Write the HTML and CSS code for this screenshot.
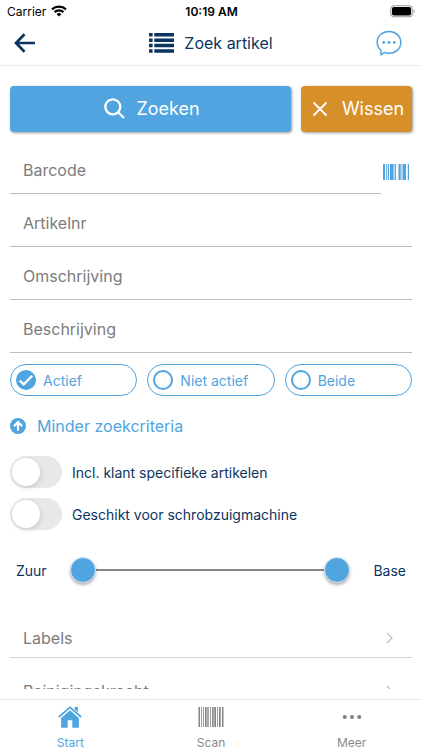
FILE: index.html
```html
<!DOCTYPE html>
<html lang="nl">
<head>
<meta charset="utf-8">
<meta name="viewport" content="width=device-width, initial-scale=1">
<title>Zoek artikel</title>
<link rel="stylesheet" href="styles.css">
</head>
<body>
<div class="status">
  <div class="status-side">
    <span>Carrier</span>
    <svg width="16" height="12" viewBox="0 0 16 12" fill="none" stroke="#000" stroke-width="2.2"><path d="M1 4.4a10.2 10.2 0 0 1 14 0M3.5 7.1a6.5 6.5 0 0 1 9 0"/><path d="M8 11.6 5.6 9.2a3.4 3.4 0 0 1 4.8 0z" fill="#000" stroke="none"/></svg>
  </div>
  <span class="status-time">10:19 AM</span>
  <div class="status-side status-end">
    <svg width="26" height="13" viewBox="0 0 26 13"><rect x=".8" y=".8" width="21.4" height="11" rx="3.2" fill="#fff" stroke="#999" stroke-width="1.1"/><rect x="2" y="2" width="19" height="8.6" rx="1.8"/><path d="M23.6 4.3c1.6.6 1.6 3.4 0 4z" fill="#999"/></svg>
  </div>
</div>
<header class="header">
  <button class="icon-button" aria-label="Terug">
    <svg width="22" height="20" viewBox="0 0 22 20" fill="none" stroke="#0b3560" stroke-width="2.7"><path d="M21 10H2.500M10.500 1.200 2 10l8.500 8.800"/></svg>
  </button>
  <h1 class="title">
    <svg width="25" height="20" viewBox="0 0 25 20" fill="#0b3560"><path d="M0 0h3.600v3.500H0zM5.300 0H25v3.500H5.300zM0 5.400h3.600v3.500H0zM5.300 5.400H25v3.500H5.300zM0 10.800h3.600v3.500H0zM5.300 10.800H25v3.500H5.300zM0 16.200h3.600v3.500H0zM5.300 16.200H25v3.500H5.300z"/></svg>
    <span>Zoek artikel</span>
  </h1>
  <button class="icon-button" aria-label="Chat">
    <svg width="26" height="26" viewBox="0 0 26 26" fill="none" stroke="#50a4e0" stroke-width="1.500" stroke-linejoin="round"><path d="M5 20.300C2.500 18.300 1.200 15.500 1.200 12.300 1.200 6 6.400 1.500 13 1.500s11.800 4.600 11.800 10.900S19.600 23.200 13 23.200c-1.600 0-3.100-.3-4.400-.8L4.900 24.800z"/><g fill="#50a4e0" stroke="none"><circle cx="7.700" cy="12.400" r="1.400"/><circle cx="13" cy="12.400" r="1.400"/><circle cx="18.300" cy="12.400" r="1.400"/></g></svg>
  </button>
</header>

<main class="content">
  <form class="form">
    <div class="actions">
      <button type="button" class="button search">
        <svg width="21" height="21" viewBox="0 0 21 21" fill="none" stroke="#fff" stroke-width="2.300"><circle cx="8.800" cy="8.800" r="7.500"/><path d="m14 14 6 6"/></svg>
        <span>Zoeken</span>
      </button>
      <button type="reset" class="button clear">
        <svg width="16" height="16" viewBox="0 0 16 16" fill="none" stroke="#fff" stroke-width="1.900"><path d="m1.500 1.500 13 13M14.500 1.500l-13 13"/></svg>
        <span>Wissen</span>
      </button>
    </div>

    <div class="fields">
      <div class="barcode-row">
        <input class="field" type="text" placeholder="Barcode" aria-label="Barcode">
        <button type="button" class="barcode-button" aria-label="Scan barcode">
          <svg width="26" height="16" viewBox="0 0 26 16" fill="#50a4e0"><path d="M0 0h2v16H0zM3.200 0h1v16h-1zM5 0h1v16H5zM7 0h3.600v16H7zM11.600 0h1.300v16h-1.300zM15.500 0h2.200v16h-2.200zM18.500 0h1v16h-1zM20 0h3v16h-3zM24.800 0H26v16h-1.200z"/></svg>
        </button>
      </div>
      <input class="field" type="text" placeholder="Artikelnr" aria-label="Artikelnr">
      <input class="field" type="text" placeholder="Omschrijving" aria-label="Omschrijving">
      <input class="field" type="text" placeholder="Beschrijving" aria-label="Beschrijving">
    </div>

    <div class="pills" role="radiogroup" aria-label="Status">
      <label class="pill"><span class="pill-mark"><input type="radio" name="status" checked><svg width="20" height="20" viewBox="0 0 20 20" fill="none" stroke="#fff" stroke-width="2.300"><path d="m3.800 10.700 3.900 3.600 8.500-8.500"/></svg></span>Actief</label>
      <label class="pill"><span class="pill-mark"><input type="radio" name="status"></span>Niet actief</label>
      <label class="pill"><span class="pill-mark"><input type="radio" name="status"></span>Beide</label>
    </div>

    <button type="button" class="less">
      <svg width="16" height="16" viewBox="0 0 16 16"><circle cx="8" cy="8" r="8" fill="#50a4e0"/><path d="M8 12.800V4.500M3.900 8.200 8 4.100l4.100 4.100" fill="none" stroke="#fff" stroke-width="2.200"/></svg>
      <span>Minder zoekcriteria</span>
    </button>

    <div class="switches">
      <label class="switch-row"><input class="switch" type="checkbox" role="switch">Incl. klant specifieke artikelen</label>
      <label class="switch-row"><input class="switch" type="checkbox" role="switch">Geschikt voor schrobzuigmachine</label>
    </div>

    <div class="range">
      <label for="ph-min">Zuur</label>
      <div class="range-track">
        <input id="ph-min" type="range" min="0" max="14" value="0">
        <input id="ph-max" type="range" min="0" max="14" value="14">
      </div>
      <label for="ph-max">Base</label>
    </div>

    <div class="links">
      <a class="link-row" href="#labels">Labels<svg width="7" height="12" viewBox="0 0 7 12" fill="none" stroke="#c2c2c4" stroke-width="1.300"><path d="m1 1 5 5-5 5"/></svg></a>
      <a class="link-row" href="#reinigingskracht">Reinigingskracht<svg width="7" height="12" viewBox="0 0 7 12" fill="none" stroke="#c2c2c4" stroke-width="1.300"><path d="m1 1 5 5-5 5"/></svg></a>
    </div>
  </form>
</main>

<nav class="tabs">
  <a class="tab active" href="#start">
    <svg width="24" height="22" viewBox="0 0 24 22" fill="#50a4e0"><path d="M12 4.300 20.900 12v8.500c0 .8-.5 1.300-1.300 1.300h-5.300v-7.500H9.700v7.500H4.400c-.8 0-1.300-.5-1.300-1.300V12z"/><path d="M16.600 1h3.300v6.600l-3.300-2.900z"/><path d="M.8 11.300 12 1.500l11.200 9.800" fill="none" stroke="#fff" stroke-width="3.400"/><path d="M.8 11 12 1.300 23.200 11" fill="none" stroke="#50a4e0" stroke-width="1.700"/></svg>
    <span>Start</span>
  </a>
  <a class="tab" href="#scan">
    <svg width="26" height="20" viewBox="0 0 26 20" fill="#858585"><path d="M.5 0H2v20H.5zM3.200 0h.8v20h-.8zM5 0h.8v20H5zM7 0h1.600v20H7zM9.300 0h1.400v20H9.300zM12 0h.8v20H12zM14.100 0h1.600v20h-1.600zM16.300 0H18v20h-1.700zM19 0h.8v20H19zM21 0h1.700v20H21zM24 0h1.500v20H24z"/></svg>
    <span>Scan</span>
  </a>
  <a class="tab" href="#meer">
    <svg width="20" height="20" viewBox="0 0 20 20" fill="#858585"><circle cx="2.800" cy="10" r="2.100"/><circle cx="10" cy="10" r="2.100"/><circle cx="17.200" cy="10" r="2.100"/></svg>
    <span>Meer</span>
  </a>
</nav>
</body>
</html>
```

FILE: styles.css
```css
* {
  box-sizing: border-box;
}

:root {
  --blue: #50a4e0;
  --navy: #0b3560;
  --gray: #7c7c7c;
}

body {
  display: flex;
  flex-direction: column;
  height: 100vh;
  margin: 0;
  background: #fff;
  color: var(--navy);
  font-family: Inter, "Liberation Sans", sans-serif;
  font-size: 14px;
}

svg {
  display: block;
  flex: none;
}

button,
input {
  margin: 0;
  font: inherit;
}

button {
  padding: 0;
  border: 0;
  background: none;
}

a {
  color: inherit;
  text-decoration: none;
}

.status {
  display: flex;
  align-items: center;
  height: 22px;
  padding: 0 6px 0 7px;
  color: #000;
  font-size: 12px;
}

.status-side {
  display: flex;
  flex: 1;
  align-items: center;
  gap: 5px;
}

.status-end {
  justify-content: flex-end;
}

.status-time {
  font-weight: 600;
}

.header {
  display: grid;
  grid-template-columns: 1fr auto 1fr;
  align-items: center;
  height: 44px;
  padding: 0 20px 2px 14px;
  border-bottom: 1px solid #ececec;
}

.icon-button {
  justify-self: start;
}

.icon-button:last-child {
  justify-self: end;
}

.title {
  display: flex;
  align-items: center;
  gap: 10px;
  margin: 0 0 0 6px;
  font-size: 16px;
  font-weight: 400;
}

.content {
  flex: 1;
  min-height: 0;
  margin-bottom: 10px;
  padding: 20px 10px 0;
  overflow-y: auto;
  scrollbar-width: none;
}

.actions {
  display: flex;
  gap: 10px;
}

.button {
  display: flex;
  align-items: center;
  justify-content: center;
  height: 46px;
  padding: 0 0 1px 3px;
  border-radius: 4px;
  box-shadow: 1px 1px 3px rgba(0, 0, 0, 0.4);
  color: #fff;
  font-size: 18px;
}

.search {
  flex: 1;
  gap: 11px;
  background: var(--blue);
}

.clear {
  gap: 14px;
  width: 111px;
  background: #d68f29;
}

.fields {
  display: flex;
  flex-direction: column;
  margin-top: 9px;
}

.field {
  width: 100%;
  min-width: 0;
  height: 53px;
  padding: 6px 12px 0 13px;
  border: 0;
  border-bottom: 1px solid #bcbcbc;
  border-radius: 0;
  outline: 0;
  background: transparent;
  color: var(--navy);
  font-size: 16px;
  line-height: 20px;
}

.field::placeholder {
  color: var(--gray);
  opacity: 1;
}

.barcode-row {
  display: flex;
  align-items: center;
  gap: 2px;
  padding-right: 3px;
}

.barcode-button {
  padding-top: 9px;
}

.pills {
  display: grid;
  grid-template-columns: repeat(3, 1fr);
  gap: 10px;
  margin-top: 11px;
}

.pill {
  display: flex;
  align-items: center;
  gap: 7px;
  height: 32px;
  padding-left: 5px;
  border: 1px solid var(--blue);
  border-radius: 16px;
  color: var(--blue);
}

.pill-mark {
  display: grid;
  place-items: center;
}

.pill-mark > * {
  grid-area: 1 / 1;
}

.pill-mark input {
  appearance: none;
  width: 20px;
  height: 20px;
  border: 2px solid var(--blue);
  border-radius: 50%;
}

.pill-mark input:checked {
  background: var(--blue);
}

.less {
  display: flex;
  align-items: center;
  gap: 11px;
  height: 20px;
  margin-top: 20px;
  color: var(--blue);
  font-size: 16px;
}

.switches {
  display: grid;
  gap: 10px;
  margin-top: 20px;
}

.switch-row {
  display: flex;
  align-items: center;
  gap: 10px;
}

.switch {
  display: flex;
  appearance: none;
  width: 52px;
  height: 32px;
  padding: 2px;
  border-radius: 16px;
  background: #e8e8ea;
}

.switch::before {
  width: 28px;
  height: 28px;
  border-radius: 50%;
  background: #fff;
  box-shadow: 1px 2px 5px rgba(0, 0, 0, 0.12);
  content: "";
}

.switch:checked {
  justify-content: flex-end;
  background: var(--blue);
}

.range {
  display: flex;
  align-items: center;
  justify-content: space-between;
  gap: 23px;
  height: 30px;
  margin-top: 25px;
  padding: 0 6px;
}

.range-track {
  display: grid;
  flex: 1;
  align-items: center;
  background: linear-gradient(#858585, #858585) center / calc(100% - 26px) 2px no-repeat;
}

.range-track input {
  appearance: none;
  grid-area: 1 / 1;
  width: 100%;
  height: 30px;
  background: transparent;
  pointer-events: none;
}

.range-track input::-webkit-slider-thumb {
  appearance: none;
  width: 26px;
  height: 26px;
  border: 1px solid #d5e6f2;
  border-radius: 50%;
  background: var(--blue);
  box-shadow: 0 2px 3px rgba(0, 0, 0, 0.3);
  pointer-events: auto;
}

.links {
  margin-top: 20px;
}

.link-row {
  display: flex;
  align-items: center;
  justify-content: space-between;
  height: 53px;
  padding: 14px 19px 0 13px;
  border-bottom: 1px solid #d4d4d4;
  color: var(--gray);
  font-size: 16px;
}

.tabs {
  display: grid;
  grid-template-columns: repeat(3, 1fr);
  height: 51px;
  border-top: 1px solid #ececec;
}

.tab {
  display: grid;
  grid-template-rows: 22px 16px;
  row-gap: 6px;
  align-content: end;
  place-items: center;
  color: #8a8a8a;
  font-size: 12px;
}

.tab.active {
  color: var(--blue);
}
```
